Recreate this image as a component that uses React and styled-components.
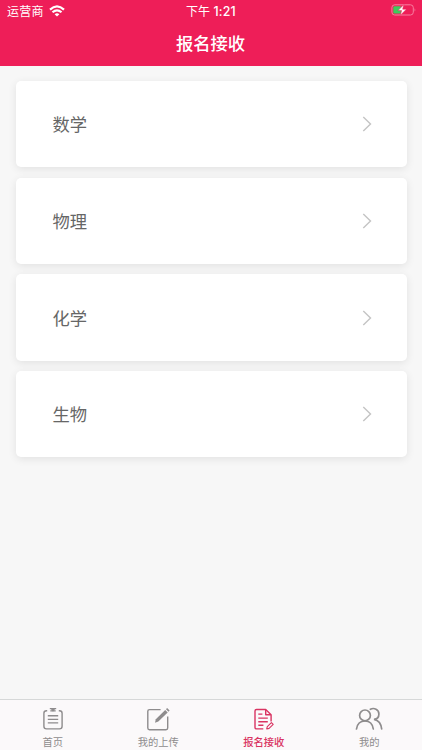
import React, { Component } from 'react';
import styled, { createGlobalStyle } from 'styled-components';

const GlobalStyle = createGlobalStyle`
    * {
        box-sizing: border-box;
    }

    body {
        margin: 0;
        background: #f7f7f7;
        font-family: Inter, "Noto Sans CJK SC", sans-serif;
    }
`;

const subjects = ['数学', '物理', '化学', '生物'];

const WifiIcon = () => <svg width='16' height='12' viewBox='0 0 16 12' fill='none' stroke='#fff' strokeWidth='2.2'>
    <path d='M1 4.6Q8 -1.9 15 4.6' />
    <path d='M3.5 7.3Q8 3.3 12.5 7.3' />
    <path d='M8 11.5L5.6 9.2Q8 7.2 10.4 9.2Z' fill='#fff' stroke='none' />
</svg>;

const BatteryIcon = () => <svg width='26' height='12' viewBox='0 0 26 12'>
    <rect x='0.9' y='0.8' width='21.4' height='10.2' rx='2.8' fill='none' stroke='#f77ea0' />
    <path d='M23.7 4.2Q25 5.9 23.7 7.6Z' fill='#f995b1' />
    <path d='M3.7 2.2H9.8V9.6H3.7Q2.3 9.6 2.3 8.2V3.6Q2.3 2.2 3.7 2.2Z' fill='#3fca5d' />
    <path d='M12.8 0.6L7 6.6H10.6L9.4 11.2L15.4 5.2H11.7Z' fill='#fff' stroke='#ee1e58' strokeWidth='0.5' />
</svg>;

const HomeIcon = () => <svg width='22' height='24' viewBox='0 0 22 24' fill='none' stroke='currentColor' strokeWidth='1.4'>
    <path d='M5.2 3.7H4.5Q1.9 3.7 1.9 6.3V19.3Q1.9 21.9 4.5 21.9H17.5Q20.1 21.9 20.1 19.3V6.3Q20.1 3.7 17.5 3.7H16.8' />
    <path d='M7.8 1.6H14.2M8.3 3.9H13.7M9.6 1.8L11 3.7L12.4 1.8M5.8 8.8H16.2M5.8 12.4H16.2M5.8 15.9H16.2' />
</svg>;

const UploadIcon = () => <svg width='24' height='24' viewBox='0 0 24 24' fill='none' stroke='currentColor' strokeWidth='1.4'>
    <path d='M14.6 2.6H3.5Q1.8 2.6 1.8 4.3V21Q1.8 22.7 3.5 22.7H20Q21.7 22.7 21.7 21V9.6' />
    <path d='M9 15.8L9.8 12.2L19.2 2.9L21.7 5.4L12.3 14.6Z' fill='currentColor' stroke='none' />
    <path d='M20 2.2L21.1 1.1L23.6 3.6L22.5 4.7Z' fill='currentColor' stroke='none' />
</svg>;

const ReceiveIcon = () => <svg width='22' height='24' viewBox='0 0 22 24' fill='none' stroke='currentColor' strokeWidth='1.4' strokeLinejoin='round'>
    <path d='M10.3 21.9H3.5Q2 21.9 2 20.4V4Q2 2.5 3.5 2.5H12.7L18.1 7.7V14.4' />
    <path d='M12.7 2.7V7.7H18M5.3 7.1H9.4M5.3 11.1H14.8M5.3 14.7H14.8M5.3 18.3H10.4' />
    <path d='M13.7 21.9L14.3 19.6L18.4 15.6L20.2 17.4L16.1 21.4Z' strokeWidth='1.1' />
</svg>;

const MineIcon = () => <svg width='28' height='24' viewBox='0 0 28 24' fill='none' stroke='currentColor' strokeWidth='1.7' strokeLinecap='round'>
    <circle cx='10' cy='8.4' r='5.4' />
    <path d='M1.5 22C2.2 17 5.4 14 10 14S17.6 17 18.3 22' />
    <path d='M15.4 2.3C19 .3 23.9 2.5 23.9 6.9C23.9 10.1 21.9 12 19 12.3C23 13.1 26.1 16.6 26.7 22' />
</svg>;

const tabs = [
    { label: '首页', icon: HomeIcon },
    { label: '我的上传', icon: UploadIcon },
    { label: '报名接收', icon: ReceiveIcon },
    { label: '我的', icon: MineIcon }
];

export default class App extends Component {

    state = { active: 2 };

    getCards = () => subjects.map(name => <Card key={name}>
        <CardName>{name}</CardName>
        <svg width='10' height='16' viewBox='0 0 10 16' fill='none' stroke='#c4c4c4' strokeWidth='1.4'>
            <path d='M1.3 1L8.5 8L1.3 15' />
        </svg>
    </Card>);

    getTabs = () => tabs.map(({ label, icon: Icon }, idx) => {
        const active = idx === this.state.active;
        return <Tab key={label} $active={active} onClick={() => this.setState({ active: idx })}>
            <Icon />
            <TabLabel>{label}</TabLabel>
        </Tab>;
    });

    render() {
        return <Page>
            <GlobalStyle />
            <Header>
                <StatusBar>
                    <Carrier>运营商<WifiIcon /></Carrier>
                    <Time>下午 <Clock>1:21</Clock></Time>
                    <Battery><BatteryIcon /></Battery>
                </StatusBar>
                <Title>报名接收</Title>
            </Header>
            <List>{this.getCards()}</List>
            <TabBar>{this.getTabs()}</TabBar>
        </Page>;
    }
}

const Page = styled.div`
    display: flex;
    flex-direction: column;
    height: 100vh;
    background: #f7f7f7;
`;

const Header = styled.header`
    height: 66px;
    background: #ee1e58;
    color: #fff;
`;

const StatusBar = styled.div`
    display: grid;
    grid-template-columns: 1fr auto 1fr;
    align-items: center;
    height: 22px;
    padding: 0 5px 0 7px;
    font-size: 12px;
    line-height: 21px;
`;

const Carrier = styled.div`
    display: flex;
    align-items: center;
    gap: 5px;
    padding-top: 1px;
    letter-spacing: 0.3px;

    svg {
        margin-top: -2px;
    }
`;

const Time = styled.div`
    margin-left: -2px;
    padding-top: 1px;
`;

const Clock = styled.span`
    font-size: 12.4px;
    font-weight: 500;
    letter-spacing: 0.2px;
`;

const Battery = styled.div`
    display: flex;
    justify-content: flex-end;
    padding-bottom: 2px;
`;

const Title = styled.h1`
    margin: 0;
    padding-right: 1px;
    font-size: 17.3px;
    font-weight: 500;
    line-height: 43px;
    text-align: center;
`;

const List = styled.main`
    display: flex;
    flex: 1;
    flex-direction: column;
    gap: 10.3px;
    padding: 15px 15.5px 0 15.6px;
`;

const Card = styled.div`
    display: flex;
    align-items: center;
    justify-content: space-between;
    height: 86.4px;
    padding: 0 34.5px 0 36.8px;
    border-radius: 5px;
    background: #fff;
    box-shadow: 0 2px 8px rgba(0, 0, 0, 0.09);
    color: #666;
    font-size: 17.3px;
`;

const CardName = styled.span`
    padding-bottom: 1px;
`;

const TabBar = styled.nav`
    display: flex;
    height: 51px;
    border-top: 1px solid #d6d8d8;
    background: #fbf9fa;
`;

const Tab = styled.div`
    display: flex;
    flex: 1;
    flex-direction: column;
    align-items: center;
    padding-top: 7px;
    color: ${props => props.$active ? '#d93462' : '#8e8c8d'};
    font-weight: ${props => props.$active ? 500 : 400};
`;

const TabLabel = styled.span`
    margin-top: 4px;
    font-size: 10.3px;
    line-height: 15px;
`;
